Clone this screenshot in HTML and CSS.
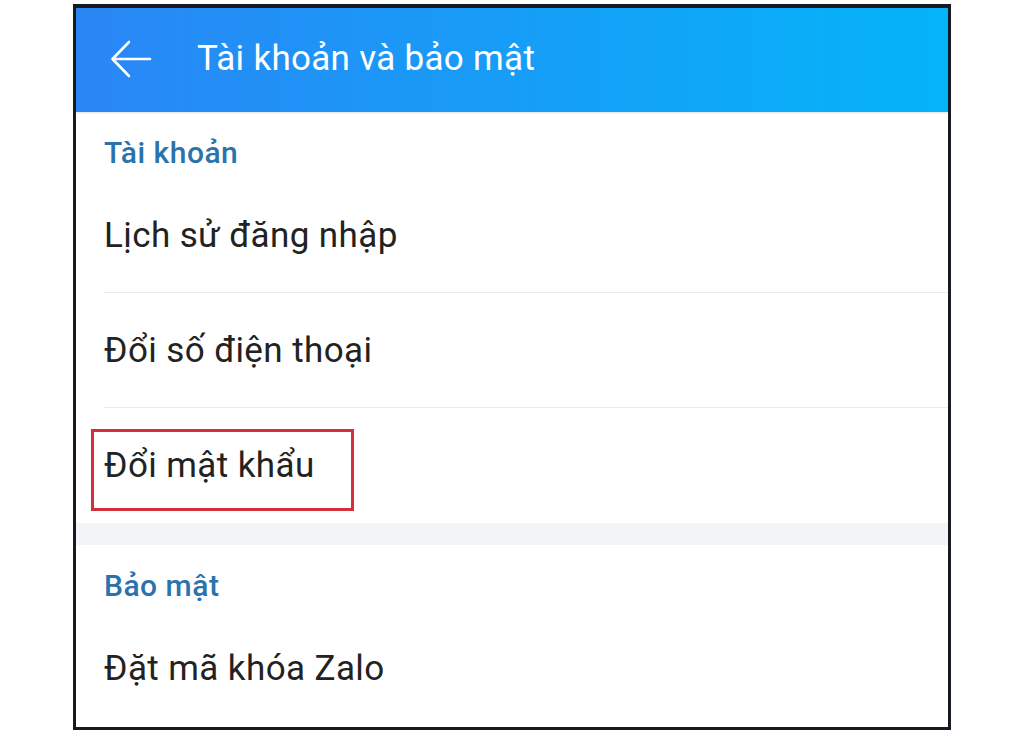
FILE: index.html
```html
<!DOCTYPE html>
<html lang="vi">
<head>
    <meta charset="UTF-8">
    <meta name="viewport" content="width=device-width, initial-scale=1.0">
    <title>Tài khoản và bảo mật</title>
    <link rel="stylesheet" href="styles.css">
</head>
<body>
    <div class="phone">
        <div class="header">
            <svg class="back" width="42" height="38" viewBox="0 0 42 38">
                <path d="M40 19H3M19 2L2.5 19L19 36" fill="none" stroke="#fff" stroke-width="2.6" stroke-linecap="round" stroke-linejoin="round"/>
            </svg>
            <h1>Tài khoản và bảo mật</h1>
        </div>

        <div class="section-title">Tài khoản</div>
        <div class="item">Lịch sử đăng nhập</div>
        <div class="item">Đổi số điện thoại</div>
        <div class="item last">
            Đổi mật khẩu
            <span class="highlight"></span>
        </div>

        <div class="gap"></div>

        <div class="section-title">Bảo mật</div>
        <div class="item last">Đặt mã khóa Zalo</div>
    </div>
</body>
</html>
```

FILE: styles.css
```css
body {
    margin: 0;
    background: #fff;
    font-family: Roboto, "Noto Sans", sans-serif;
}
.phone {
    width: 872px;
    height: 719px;
    margin: 4px 0 0 73px;
    border: 3px solid #161a22;
    border-top-width: 4px;
    background: #fff;
    overflow: hidden;
}
.header {
    height: 104px;
    display: flex;
    align-items: center;
    padding: 0 0 4px 34px;
    box-sizing: border-box;
    background: linear-gradient(to right, #2a86f5, #04b4f9);
    box-shadow: 0 1px 2px rgba(0, 0, 0, 0.12);
}
.back {
    display: block;
    margin-top: 1px;
}
.header h1 {
    margin: 0 0 0 45px;
    color: #fff;
    font-size: 35px;
    font-weight: 400;
    letter-spacing: 0.3px;
}
.section-title {
    height: 66px;
    display: flex;
    align-items: center;
    padding: 14px 0 0 28px;
    box-sizing: border-box;
    color: #2b73ad;
    font-size: 30px;
    font-weight: 500;
    letter-spacing: 0.5px;
}
.item {
    position: relative;
    height: 115px;
    display: flex;
    align-items: center;
    margin-left: 28px;
    border-bottom: 1px solid #ebebeb;
    box-sizing: border-box;
    color: #222;
    font-size: 35px;
    letter-spacing: 0.4px;
}
.item.last {
    border-bottom: none;
}
.highlight {
    position: absolute;
    left: -13px;
    top: 21px;
    width: 257px;
    height: 76px;
    border: 3px solid #d3303c;
}
.gap {
    height: 22px;
    background: #f3f4f6;
}
```
